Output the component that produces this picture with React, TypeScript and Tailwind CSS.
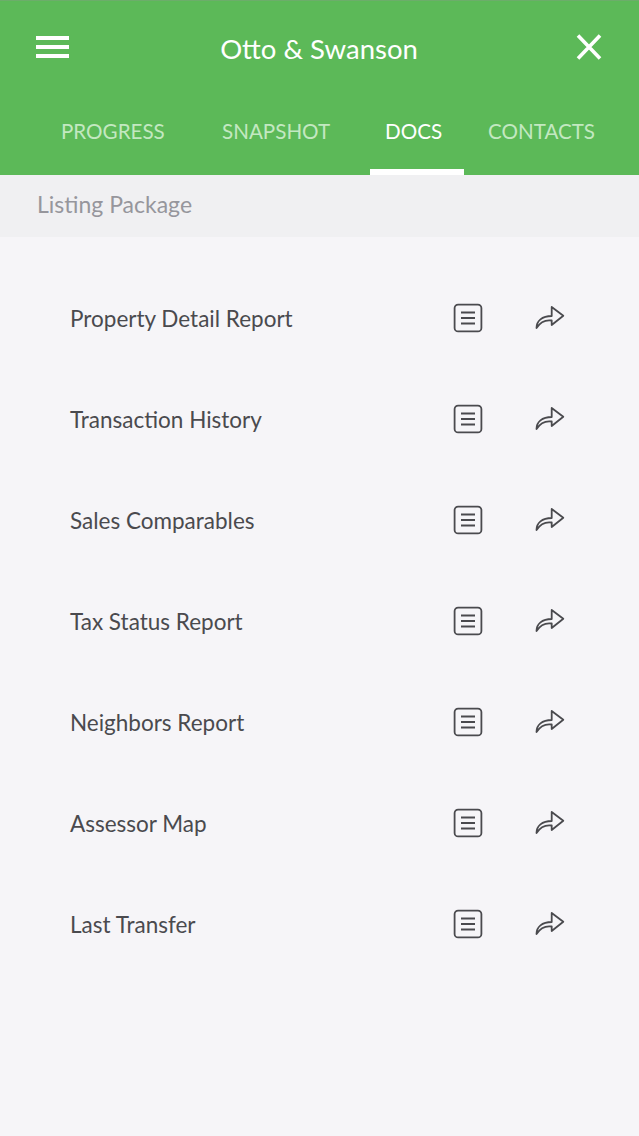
const FONT = 'font-["Lato",sans-serif]';

const tabs = [
  { label: 'PROGRESS', width: 'w-[161px]', active: false },
  { label: 'SNAPSHOT', width: 'w-[163px]', active: false },
  { label: 'DOCS', width: 'w-[94px]', active: true },
  { label: 'CONTACTS', width: 'ml-[9px] w-[166px]', active: false },
];

const docs = [
  'Property Detail Report',
  'Transaction History',
  'Sales Comparables',
  'Tax Status Report',
  'Neighbors Report',
  'Assessor Map',
  'Last Transfer',
];

function DocIcon() {
  return (
    <svg width="30" height="30" viewBox="0 0 30 30" fill="none" stroke="#4a4a4e" strokeWidth="1.8" className="-translate-y-[1px]">
      <rect x="1.6" y="1.6" width="26.8" height="26.8" rx="3.5" />
      <path d="M8 9.5h14M8 15h14M8 20.5h14" />
    </svg>
  );
}

function ShareIcon() {
  return (
    <svg width="30" height="26" viewBox="0 0 30 26" fill="none" stroke="#4a4a4e" strokeWidth="1.8" strokeLinejoin="round" strokeLinecap="round" className="-translate-y-[1px]">
      <path d="M1.5 23C1.5 16 7 11 16.7 11V2L28.3 10.7L16.7 20V15.5C10 14.5 5 17.5 1.5 23Z" />
    </svg>
  );
}

export default function App() {
  return (
    <div className={`${FONT} flex h-[1136px] w-[639px] flex-col overflow-hidden bg-[#f6f5f8]`}>
      <header className="h-[175px] shrink-0 border-t border-[#6cad6a] bg-[#5cb958]">
        <div className="flex h-[96px] items-center justify-between pl-[36px] pr-[36px]">
          <div className="flex w-[33px] -translate-y-[2px] flex-col gap-[5px]">
            <span className="h-[4px] bg-white" />
            <span className="h-[4px] bg-white" />
            <span className="h-[4px] bg-white" />
          </div>
          <h1 className="-translate-x-[3px] text-[27.5px] font-normal text-white">Otto &amp; Swanson</h1>
          <svg width="28" height="28" viewBox="0 0 28 28" stroke="white" strokeWidth="3.6" className="-translate-y-[2px]">
            <path d="M3 2.5L25 25.5M25 2.5L3 25.5" />
          </svg>
        </div>
        <nav className="flex h-[78px] pl-[46px]">
          {tabs.map((tab) => (
            <div key={tab.label} className={`relative ${tab.width} shrink-0`}>
              <span className={`block pl-[15px] pt-[19px] text-[20.6px] leading-[30px] ${tab.active ? 'text-white' : 'text-[#c3e8c1]'}`}>
                {tab.label}
              </span>
              {tab.active && <span className="absolute bottom-0 left-0 h-[6px] w-full bg-white" />}
            </div>
          ))}
        </nav>
      </header>
      <div className="flex h-[62px] shrink-0 items-center bg-[#f0f0f2] pb-[4px] pl-[37px] text-[23px] text-[#96969c]">
        Listing Package
      </div>
      <ul className="pt-[31px]">
        {docs.map((name) => (
          <li key={name} className="flex h-[101px] items-center pl-[70px] text-[22.5px] text-[#4a4a4e]">
            <span className="w-[383px]">{name}</span>
            <DocIcon />
            <span className="ml-[52px]">
              <ShareIcon />
            </span>
          </li>
        ))}
      </ul>
    </div>
  );
}
